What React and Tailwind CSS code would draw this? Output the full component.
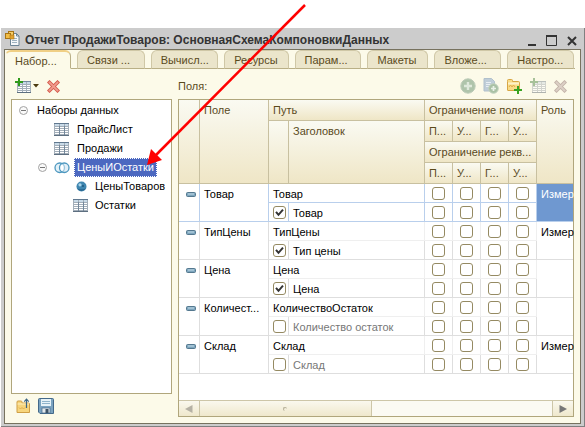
import React, { useState } from "react";

const tabs = [
  { title: "Набор...", size: "flex-[66_1_0]" },
  { title: "Связи ...", size: "flex-[68_1_0]" },
  { title: "Вычисл...", size: "flex-[68_1_0]" },
  { title: "Ресурсы", size: "flex-[64_1_0]" },
  { title: "Парам...", size: "flex-[67_1_0]" },
  { title: "Макеты", size: "flex-[60_1_0]" },
  { title: "Вложе...", size: "flex-[67_1_0]" },
  { title: "Настро...", size: "flex-[67_1_0]" },
];

const fields = [
  { field: "Товар", path: "Товар", title: "Товар", on: true, role: "Измер", selected: true },
  { field: "ТипЦены", path: "ТипЦены", title: "Тип цены", on: true, role: "Измер" },
  { field: "Цена", path: "Цена", title: "Цена", on: true, role: "" },
  { field: "Количест...", path: "КоличествоОстаток", title: "Количество остаток", on: false, role: "" },
  { field: "Склад", path: "Склад", title: "Склад", on: false, role: "Измер" },
];

const flags = ["Поле", "Условие", "Группа", "Упорядочивание"];

function TableIcon({ className = "" }) {
  return (
    <svg className={"shrink-0 " + className} width="16" height="14" viewBox="0 0 16 14" shapeRendering="crispEdges">
      <rect x="0" y="0" width="15" height="13" fill="#a3aeb9" />
      <rect x="0" y="0" width="15" height="1" fill="#60788f" />
      <rect x="0" y="12" width="15" height="1" fill="#5d6f80" />
      {[1, 6, 11].map((x) =>
        [1, 4, 6, 8, 10].map((y) => (
          <rect key={x + "-" + y} x={x} y={y} width={x === 11 ? 3 : 4} height={y === 1 ? 2 : 1} fill={y === 1 ? "#c8dae8" : "#ffffff"} />
        ))
      )}
      <rect x="5" y="3" width="1" height="9" fill="#73879a" />
      <rect x="10" y="3" width="1" height="9" fill="#73879a" />
    </svg>
  );
}

function AddTableIcon() {
  return (
    <svg width="17" height="16" viewBox="0 0 17 16" shapeRendering="crispEdges">
      <rect x="2" y="3" width="14" height="12" fill="#a3aeb9" />
      <rect x="2" y="3" width="14" height="1" fill="#71899e" />
      <rect x="2" y="14" width="14" height="1" fill="#5d6f80" />
      {[3, 8, 12].map((x) =>
        [4, 7, 9, 11, 13].map((y) => (
          <rect key={x + "-" + y} x={x} y={y} width={x === 3 ? 4 : 3} height={y === 4 ? 2 : 1} fill={y === 4 ? "#c8dae8" : "#ffffff"} />
        ))
      )}
      <path d="M3 0h2v3h3v2H5v3H3V5H0V3h3z" fill="#2f9a1c" />
    </svg>
  );
}

function CrossIcon() {
  return (
    <svg width="13" height="13" viewBox="0 0 13 13">
      <path d="M2.500 2.500l8 8M10.500 2.500l-8 8" stroke="#d4584b" strokeWidth="3.600" strokeLinecap="square" />
      <path d="M2.500 2.500l8 8M10.500 2.500l-8 8" stroke="#f09a8d" strokeWidth="1.800" strokeLinecap="square" />
    </svg>
  );
}

function ToggleIcon() {
  return (
    <svg className="shrink-0" width="9" height="9" viewBox="0 0 9 9">
      <circle cx="4.500" cy="4.500" r="4" fill="#fafafa" stroke="#a3a3a3" />
      <path d="M2 4.500h5" stroke="#777" />
    </svg>
  );
}

function UnionIcon() {
  return (
    <svg className="shrink-0" width="16" height="12" viewBox="0 0 16 12">
      <rect x="1" y="1" width="9.500" height="9.500" rx="4.700" fill="#e3f1f8" stroke="#4c97bf" strokeWidth="1.300" />
      <rect x="5.500" y="1" width="9.500" height="9.500" rx="4.700" fill="#cfe5f1" fillOpacity=".6" stroke="#4c97bf" strokeWidth="1.300" />
      <ellipse cx="8" cy="5.800" rx="1.500" ry="3" fill="#fff" />
    </svg>
  );
}

function BallIcon() {
  return (
    <svg className="shrink-0" width="11" height="11" viewBox="0 0 11 11">
      <circle cx="5.500" cy="5.500" r="5" fill="#3f86b0" />
      <path d="M1 7.200a5 5 0 0 0 9 0c-2 1.500-7 1.500-9 0z" fill="#27658e" />
      <circle cx="4" cy="3.800" r="1.600" fill="#a9d4ea" />
      <circle cx="7" cy="5" r="1" fill="#1f597f" />
    </svg>
  );
}

function ReportIcon() {
  return (
    <svg className="shrink-0" width="16" height="17" viewBox="0 0 16 17">
      <path d="M5.500 3.500h6l2.500 2.500v9.500H5.500z" fill="#f5f8fa" stroke="#6c8596" />
      <path d="M7 8.500h5M7 10.500h5M7 12.500h5" stroke="#9db2c0" />
      <path d="M11.500 3.500V6H14" fill="none" stroke="#6c8596" />
      <rect x="3.500" y="1.500" width="5" height="4" fill="#f6cf6a" stroke="#a87516" />
      <rect x=".5" y="3.500" width="5" height="5" fill="#f2bd45" stroke="#a87516" />
      <rect x="5" y="5" width="4" height="4" fill="#e2a22e" stroke="#a87516" strokeWidth=".6" />
    </svg>
  );
}

function PlusCircleIcon() {
  return (
    <svg width="16" height="16" viewBox="0 0 16 16">
      <circle cx="8" cy="8" r="7.200" fill="#afc4ab" stroke="#bccbb8" />
      <path d="M8 4v8M4 8h8" stroke="#dfe9dc" strokeWidth="2.400" />
    </svg>
  );
}

function CopyAddIcon() {
  return (
    <svg width="16" height="16" viewBox="0 0 16 16">
      <path d="M1 .5h7.500l3 3V13H1z" fill="#bfcdd8" stroke="#b0c0cc" />
      <path d="M3 4.500h5M3 6.500h6M3 8.500h4" stroke="#e8eef2" />
      <circle cx="10.500" cy="10.500" r="4.800" fill="#a9c1a4" stroke="#c3d2c0" />
      <path d="M10.500 8v5M8 10.500h5" stroke="#e9f1e7" strokeWidth="1.700" />
    </svg>
  );
}

function FolderAddIcon() {
  return (
    <svg width="17" height="16" viewBox="0 0 17 16">
      <path d="M1.500 3.500V2.500q0-1 1-1h3q1 0 1 1v1h6q1 0 1 1v7.500q0 .5-.5.5h-11q-.5 0-.5-.5z" fill="#f9dc86" stroke="#d7a644" />
      <path d="M2 5.500h11" stroke="#fdf2c8" strokeWidth="2" />
      <path d="M3 9l1.500-2L6 9l1.500-2L9 9" fill="none" stroke="#e0ae4b" />
      <path d="M11 8h2v3h3v2h-3v3h-2v-3H8v-2h3z" fill="#37a321" />
    </svg>
  );
}

function FolderUpIcon() {
  return (
    <svg width="15" height="16" viewBox="0 0 15 16">
      <path d="M1 5V4q0-1 1-1h3q1 0 1 1v1h6.500q1 0 1 1v8.500H1z" fill="#f7d57c" stroke="#cf9f45" />
      <path d="M1.500 6h11.500" stroke="#fdf0c0" />
      <path d="M3 9.500l1.500 1.500L6 9.500 7.500 11 9 9.500" fill="none" stroke="#dfae4f" />
      <path d="M10.500 10V1.500M8.300 3.700l2.200-2.500 2.200 2.500" fill="none" stroke="#3c6584" strokeWidth="1.200" />
    </svg>
  );
}

function SaveIcon() {
  return (
    <svg width="16" height="16" viewBox="0 0 16 16">
      <path d="M.5 1.500q0-1 1-1h13q1 0 1 1v14H2l-1.500-1.500z" fill="#7ba3c0" stroke="#44698a" />
      <rect x="3" y="1" width="10" height="7" fill="#e6f2f8" />
      <path d="M4 3.500h8M4 5.500h8" stroke="#8fb4cb" />
      <rect x="4" y="10" width="8" height="5" fill="#e3e8ec" stroke="#44698a" strokeWidth=".7" />
      <rect x="7.500" y="11" width="3" height="4" fill="#3d5366" />
    </svg>
  );
}

function RowMarker() {
  return (
    <svg className="mt-2 ml-[7px]" width="10" height="5" viewBox="0 0 10 5">
      <rect x=".5" y=".5" width="9" height="4" rx="1" fill="#7da5bd" stroke="#54788f" />
      <path d="M2 2h6" stroke="#c6dde9" />
    </svg>
  );
}

function Tick({ checked = false, label }) {
  const [on, setOn] = useState(checked);
  return (
    <span className="grid size-[13px] place-items-center">
      <input
        type="checkbox"
        aria-label={label}
        checked={on}
        onChange={() => setOn(!on)}
        className="col-start-1 row-start-1 size-[13px] appearance-none rounded-[3px] border border-[#958a62] bg-white"
      />
      {on && (
        <svg className="pointer-events-none col-start-1 row-start-1" width="9" height="9" viewBox="0 0 9 9">
          <path d="M1 3.800l2.500 3L8 1.700" fill="none" stroke="#333" strokeWidth="2" />
        </svg>
      )}
    </span>
  );
}

function ToolButton({ label, disabled = false, children }) {
  return (
    <button type="button" aria-label={label} disabled={disabled} className="flex h-4 items-center justify-center disabled:opacity-100">
      {children}
    </button>
  );
}

const head = "border-r border-b border-[#c8c0a0] bg-linear-to-b from-[#fafaf2] to-[#efe6c6] px-1 text-left align-top font-normal leading-5 whitespace-nowrap";

function FieldRows({ row }) {
  const line = row.selected ? "border-[#b9cfec]" : "border-[#dedede]";
  const soft = row.selected ? "border-[#b9cfec]" : "border-[#efefef]";
  const cell = "border-r border-b " + line;
  const half = "border-r border-b " + soft;
  const lower = "border-b " + line;
  return (
    <tbody className="text-black">
      <tr className="h-[19px]">
        <td rowSpan={2} className={cell + " align-top"}><RowMarker /></td>
        <td rowSpan={2} className={cell + " pt-[2px] pl-1 align-top leading-4 whitespace-nowrap"}>{row.field}</td>
        <td colSpan={2} className={half + " pt-[2px] pl-1 leading-4"}>{row.path}</td>
        {flags.map((f) => (
          <td key={f} className={half + " pl-[7px]"}><Tick label={row.field + ": " + f} /></td>
        ))}
        <td
          rowSpan={2}
          className={lower + " pt-[2px] pl-1 align-top leading-4 whitespace-nowrap " + (row.selected ? "bg-[#6f98d0] text-white" : "")}
        >
          {row.role}
        </td>
      </tr>
      <tr className="h-[19px]">
        <td className={"border-r border-b pl-1 " + line}><Tick checked={row.on} label={"Заголовок " + row.title} /></td>
        <td className={"border-r border-b pt-[2px] pl-1 leading-4 " + line + (row.on ? "" : " text-[#777]")}>{row.title}</td>
        {flags.map((f) => (
          <td key={f} className={"border-r border-b pl-[7px] " + line}><Tick label={"Реквизиты " + row.field + ": " + f} /></td>
        ))}
      </tr>
    </tbody>
  );
}

function DataSets() {
  return (
    <section className="flex w-[161px] shrink-0 flex-col">
      <div className="flex h-[30px] items-center pt-1 pl-1">
        <ToolButton label="Добавить набор данных">
          <AddTableIcon />
          <svg width="7" height="4" viewBox="0 0 7 4"><path d="M1 0h6L4 3.500z" fill="#4b3a10" /></svg>
        </ToolButton>
        <span className="w-2" />
        <ToolButton label="Удалить"><CrossIcon /></ToolButton>
      </div>
      <ul role="tree" className="flex-1 border border-[#b0a67c] bg-white pt-px leading-[19px] text-black">
        <li role="treeitem" className="flex h-[19px] items-center gap-[9px] pl-[7px]"><ToggleIcon />Наборы данных</li>
        <li role="treeitem" className="flex h-[19px] items-center gap-[7px] pl-[42px]"><TableIcon />ПрайсЛист</li>
        <li role="treeitem" className="flex h-[19px] items-center gap-[7px] pl-[42px]"><TableIcon />Продажи</li>
        <li role="treeitem" aria-selected="true" className="flex h-[19px] items-center pl-[26px]">
          <ToggleIcon />
          <span className="ml-[7px]"><UnionIcon /></span>
          <span className="ml-1 border border-dotted border-white bg-[#4c68c0] px-[2px] leading-[17px] text-white">ЦеныИОстатки</span>
        </li>
        <li role="treeitem" className="flex h-[19px] items-center gap-2 pl-16"><BallIcon />ЦеныТоваров</li>
        <li role="treeitem" className="flex h-[19px] items-center gap-[6px] pl-[61px]"><TableIcon />Остатки</li>
      </ul>
      <div className="flex h-[29px] items-center gap-[7px] pb-[5px] pl-[5px]">
        <ToolButton label="Открыть"><FolderUpIcon /></ToolButton>
        <ToolButton label="Сохранить"><SaveIcon /></ToolButton>
      </div>
    </section>
  );
}

function Fields() {
  return (
    <section className="flex min-w-0 flex-1 flex-col pb-[6px]">
      <div className="flex h-[30px] items-center pt-1 pr-[7px]">
        <span className="flex-1">Поля:</span>
        <div className="flex items-center gap-[7px]">
          <ToolButton label="Добавить" disabled><PlusCircleIcon /></ToolButton>
          <ToolButton label="Скопировать" disabled><CopyAddIcon /></ToolButton>
          <ToolButton label="Добавить папку"><FolderAddIcon /></ToolButton>
          <span className="flex opacity-50 grayscale-50"><ToolButton label="Добавить набор" disabled><AddTableIcon /></ToolButton></span>
          <span className="flex opacity-50 grayscale-75"><ToolButton label="Удалить поле" disabled><CrossIcon /></ToolButton></span>
        </div>
      </div>
      <div className="flex flex-1 flex-col border border-[#b0a67c] bg-white">
        <div className="flex-1">
          <table className="w-full table-fixed border-separate border-spacing-0">
            <colgroup>
              <col className="w-[21px]" />
              <col className="w-[69px]" />
              <col className="w-5" />
              <col />
              <col className="w-7" />
              <col className="w-7" />
              <col className="w-7" />
              <col className="w-7" />
              <col className="w-9" />
            </colgroup>
            <thead>
              <tr className="h-[21px]">
                <th rowSpan={4} className={head} />
                <th rowSpan={4} className={head}>Поле</th>
                <th colSpan={2} className={head}>Путь</th>
                <th colSpan={4} className={head}>Ограничение поля</th>
                <th rowSpan={4} className={head + " border-r-0"}>Роль</th>
              </tr>
              <tr className="h-[21px]">
                <th rowSpan={3} className={head} />
                <th rowSpan={3} className={head}>Заголовок</th>
                <th className={head}>П...</th>
                <th className={head}>У...</th>
                <th className={head}>Г...</th>
                <th className={head}>У...</th>
              </tr>
              <tr className="h-[21px]">
                <th colSpan={4} className={head}>Ограничение рекв...</th>
              </tr>
              <tr className="h-[21px]">
                <th className={head}>П...</th>
                <th className={head}>У...</th>
                <th className={head}>Г...</th>
                <th className={head}>У...</th>
              </tr>
            </thead>
            {fields.map((row) => <FieldRows key={row.field} row={row} />)}
          </table>
        </div>
        <div className="flex h-4 border-t border-[#cdc6a8] bg-[#fbfaf3]">
          <button type="button" aria-label="Влево" className="flex w-[21px] items-center justify-center border-r border-[#cdc6a8] bg-linear-to-b from-[#faf8ee] to-[#efe8cc]">
            <svg width="8" height="8" viewBox="0 0 8 8"><path d="M7.500 0v8L0 4z" fill="#b5b1a4" /></svg>
          </button>
          <div className="flex flex-[171_1_0] items-center justify-center border-r border-[#cdc6a8] bg-linear-to-b from-[#faf8ee] to-[#efe8cc]">
            <span className="size-1 rounded-full border-t border-l border-[#b5af98]" />
          </div>
          <div className="flex-[181_1_0]" />
          <button type="button" aria-label="Вправо" className="flex w-[21px] items-center justify-center border-l border-[#cdc6a8] bg-linear-to-b from-[#faf8ee] to-[#efe8cc]">
            <svg width="8" height="8" viewBox="0 0 8 8"><path d="M.5 0v8L8 4z" fill="#777" /></svg>
          </button>
        </div>
      </div>
    </section>
  );
}

export default function App() {
  return (
    <div className="relative flex min-h-screen flex-col bg-white pt-7 pl-px font-['Liberation_Sans',Arial,sans-serif] text-[11px] text-[#5a4a1c]">
      <main className="flex flex-1 flex-col border-r border-b border-[#808080] bg-[#cccccc] pr-[3px] pb-[2px] pl-[3px]">
        <header className="flex h-[21px] items-center pr-1 pl-px text-[#333]">
          <ReportIcon />
          <h1 className="ml-1 flex-1 pt-[3px] text-[12px] font-bold whitespace-nowrap">Отчет ПродажиТоваров: ОсновнаяСхемаКомпоновкиДанных</h1>
          <div className="flex items-center gap-[10px] pt-1">
            <button type="button" aria-label="Свернуть" className="flex"><svg width="8" height="11" viewBox="0 0 8 11"><path d="M0 10h8" stroke="#333" strokeWidth="2" /></svg></button>
            <button type="button" aria-label="Развернуть" className="flex"><svg width="11" height="11" viewBox="0 0 11 11"><path d="M.5 1v9.500h10V1" fill="none" stroke="#333" /><path d="M0 1h11" stroke="#333" strokeWidth="2" /></svg></button>
            <button type="button" aria-label="Закрыть" className="flex"><svg width="10" height="10" viewBox="0 0 10 10"><path d="M1 1l8 8M9 1L1 9" stroke="#333" strokeWidth="2" /></svg></button>
          </div>
        </header>
        <div className="flex flex-1 flex-col border border-[#77725f] bg-[#fcfae9]">
          <nav role="tablist" className="flex h-[19px] pr-[5px]">
            {tabs.map((tab, i) => (
              <React.Fragment key={tab.title}>
                {i > 0 && <span className="w-[6px] shrink-0 border-b border-[#b9af86]" />}
                <button
                  type="button"
                  role="tab"
                  aria-selected={i === 0}
                  className={
                    tab.size + " rounded-t-[6px] border pl-[9px] text-left leading-[18px] whitespace-nowrap " +
                    (i === 0
                      ? "border-t-2 border-[#b9af86] border-t-[#f0cf85] border-b-transparent border-l-transparent bg-[#fcfae9]"
                      : "border-[#cfc7a6] border-b-[#b9af86] bg-[#ebe5cb]")
                  }
                >
                  {tab.title}
                </button>
              </React.Fragment>
            ))}
            <span className="w-px border-b border-[#b9af86]" />
          </nav>
          <div className="flex flex-1 gap-[6px] pr-[6px] pl-[6px]">
            <DataSets />
            <Fields />
          </div>
        </div>
      </main>
      <svg className="pointer-events-none absolute top-0 left-0" width="320" height="180" viewBox="0 0 320 180" aria-hidden="true">
        <path d="M305 5L156 155" stroke="#ff0000" strokeWidth="2.500" />
        <path d="M147 165l4-16 11 11z" fill="#ff0000" />
      </svg>
    </div>
  );
}
